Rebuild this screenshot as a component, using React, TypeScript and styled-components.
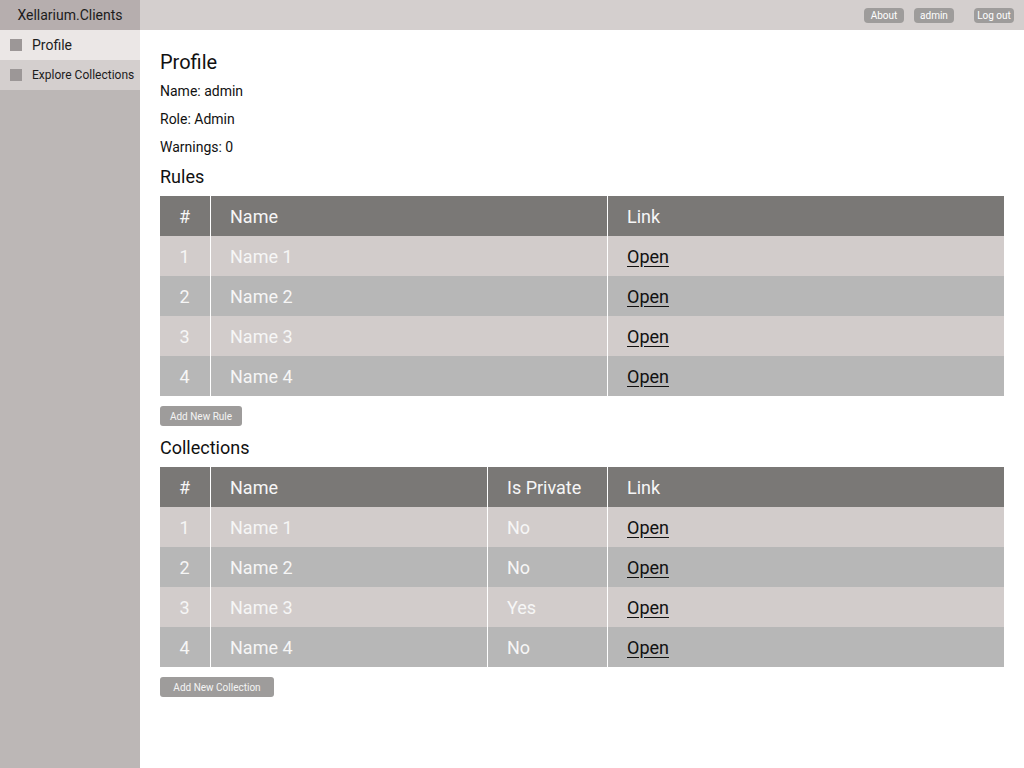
import React from "react";
import styled, { createGlobalStyle } from "styled-components";

const Global = createGlobalStyle`
  html, body { margin: 0; padding: 0; }
  body { font-family: Roboto, "Liberation Sans", sans-serif; background: #fff; }
  #root { height: 768px; }
`;

const Shell = styled.div`
  display: grid;
  grid-template-columns: 140px 1fr;
  grid-template-rows: 30px 1fr;
  width: 1024px;
  height: 768px;
`;

const Brand = styled.div`
  background: #b6aeae;
  color: #1c1c1c;
  font-size: 14px;
  display: flex;
  align-items: center;
  justify-content: center;
`;

const TopBar = styled.div`
  background: #d4cfce;
  display: flex;
  justify-content: flex-end;
  align-items: center;
  gap: 10px;
  padding-right: 10px;
`;

const TopButton = styled.button<{ $gapLeft?: number }>`
  width: 40px;
  height: 15px;
  padding: 0;
  border: none;
  border-radius: 4px;
  background: #9e9c9b;
  color: #fff;
  font-family: Roboto, "Liberation Sans", sans-serif;
  font-size: 10px;
  line-height: 15px;
  white-space: nowrap;
  margin-left: ${(p) => p.$gapLeft ?? 0}px;
`;

const Sidebar = styled.nav`
  background: #bcb7b6;
  display: flex;
  flex-direction: column;
`;

const NavItem = styled.div<{ $active?: boolean; $small?: boolean }>`
  height: 30px;
  display: flex;
  align-items: center;
  gap: 10px;
  padding-left: 10px;
  background: ${(p) => (p.$active ? "#ebe7e6" : "#d4cfce")};
  color: #1c1c1c;
  font-size: ${(p) => (p.$small ? "12px" : "14px")};
`;

const NavIcon = styled.span`
  width: 12px;
  height: 12px;
  background: #9c9797;
  flex: none;
`;

const Main = styled.main`
  padding: 21px 20px 0 20px;
  display: flex;
  flex-direction: column;
  color: #111;
`;

const Title = styled.h1`
  margin: 0;
  font-weight: 400;
  font-size: 20px;
  line-height: 22px;
  height: 22px;
`;

const InfoLine = styled.div<{ $top?: number }>`
  font-size: 14px;
  line-height: 28px;
  height: 28px;
  margin-top: ${(p) => p.$top ?? 0}px;
`;

const SectionTitle = styled.h2<{ $top?: number }>`
  margin: 0;
  margin-top: ${(p) => p.$top ?? 0}px;
  font-weight: 400;
  font-size: 18px;
  line-height: 24px;
  height: 24px;
`;

const Table = styled.div<{ $cols: string }>`
  display: grid;
  grid-template-columns: ${(p) => p.$cols};
  margin-top: 7px;
  font-size: 18px;
`;

const Cell = styled.div<{ $head?: boolean; $alt?: boolean; $center?: boolean; $first?: boolean }>`
  height: 40px;
  display: flex;
  align-items: center;
  justify-content: ${(p) => (p.$center ? "center" : "flex-start")};
  padding-left: ${(p) => (p.$center ? 0 : 19)}px;
  padding-right: ${(p) => (p.$center ? 1 : 0)}px;
  border-left: ${(p) => (p.$first ? "none" : "1px solid #fff")};
  background: ${(p) => (p.$head ? "#7a7876" : p.$alt ? "#b7b7b7" : "#d2cccb")};
  color: #f6f6f6;
`;

const LinkText = styled.a`
  color: #111;
  text-decoration: underline;
  text-underline-offset: 3px;
  cursor: pointer;
`;

const ActionButton = styled.button<{ $w: number }>`
  width: ${(p) => p.$w}px;
  height: 20px;
  margin-top: 10px;
  border: none;
  border-radius: 3px;
  background: #9e9c9b;
  color: #f4f4f4;
  font-family: Roboto, "Liberation Sans", sans-serif;
  font-size: 10px;
  padding: 0;
`;

const rows = [1, 2, 3, 4];
const priv = ["No", "No", "Yes", "No"];

export default function App() {
  return (
    <>
      <Global />
      <Shell>
        <Brand>Xellarium.Clients</Brand>
        <TopBar>
          <TopButton>About</TopButton>
          <TopButton>admin</TopButton>
          <TopButton $gapLeft={10}>Log out</TopButton>
        </TopBar>
        <Sidebar>
          <NavItem $active>
            <NavIcon />
            Profile
          </NavItem>
          <NavItem $small>
            <NavIcon />
            Explore Collections
          </NavItem>
        </Sidebar>
        <Main>
          <Title>Profile</Title>
          <InfoLine $top={4}>Name: admin</InfoLine>
          <InfoLine>Role: Admin</InfoLine>
          <InfoLine>Warnings: 0</InfoLine>
          <SectionTitle $top={4}>Rules</SectionTitle>
          <Table $cols="50px 397px 397px">
            <Cell $head $center $first>#</Cell>
            <Cell $head>Name</Cell>
            <Cell $head>Link</Cell>
            {rows.map((n) => (
              <React.Fragment key={n}>
                <Cell $alt={n % 2 === 0} $center $first>{n}</Cell>
                <Cell $alt={n % 2 === 0}>Name {n}</Cell>
                <Cell $alt={n % 2 === 0}>
                  <LinkText>Open</LinkText>
                </Cell>
              </React.Fragment>
            ))}
          </Table>
          <ActionButton $w={82}>Add New Rule</ActionButton>
          <SectionTitle $top={10}>Collections</SectionTitle>
          <Table $cols="50px 277px 120px 397px">
            <Cell $head $center $first>#</Cell>
            <Cell $head>Name</Cell>
            <Cell $head>Is Private</Cell>
            <Cell $head>Link</Cell>
            {rows.map((n, i) => (
              <React.Fragment key={n}>
                <Cell $alt={n % 2 === 0} $center $first>{n}</Cell>
                <Cell $alt={n % 2 === 0}>Name {n}</Cell>
                <Cell $alt={n % 2 === 0}>{priv[i]}</Cell>
                <Cell $alt={n % 2 === 0}>
                  <LinkText>Open</LinkText>
                </Cell>
              </React.Fragment>
            ))}
          </Table>
          <ActionButton $w={114}>Add New Collection</ActionButton>
        </Main>
      </Shell>
    </>
  );
}
